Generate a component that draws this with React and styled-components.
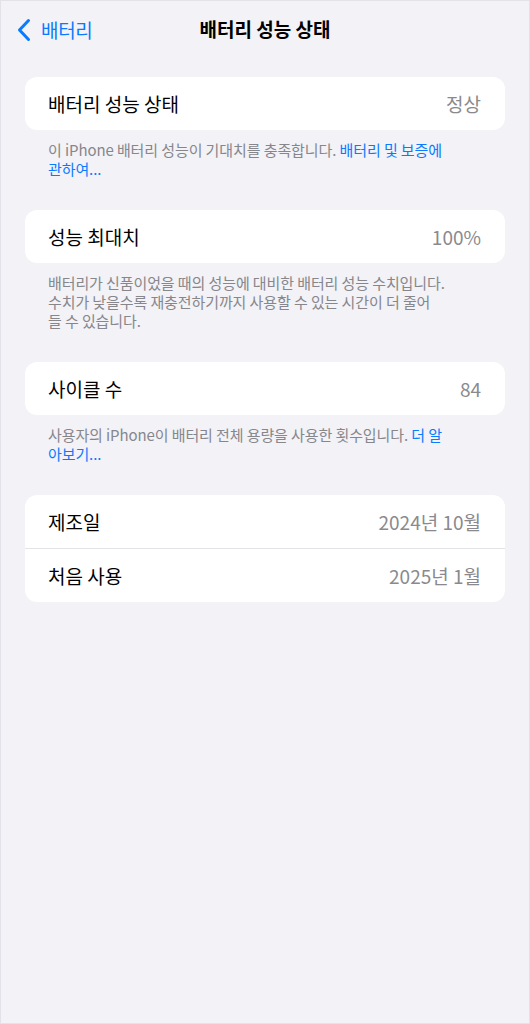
import React from 'react';
import styled, { createGlobalStyle } from 'styled-components';

const GlobalStyle = createGlobalStyle`
  * { box-sizing: border-box; }
  body {
    margin: 0;
    background: #f2f2f7;
    font-family: 'Noto Sans CJK KR', 'Noto Sans', sans-serif;
  }
`;

const Page = styled.div`
  width: 530px;
  min-height: 1024px;
  border: 1px solid #e2e2e8;
  background: #f2f2f7;
  padding: 0 24px;
`;

const NavBar = styled.header`
  position: relative;
  height: 54px;
  display: flex;
  align-items: center;
  justify-content: center;
`;

const BackButton = styled.div`
  position: absolute;
  left: -9px;
  top: 15px;
  display: flex;
  align-items: center;
  gap: 9px;
  color: #0a7aff;
  font-size: 19px;
  letter-spacing: -0.3px;
`;

const Title = styled.h1`
  margin: 0;
  font-size: 19px;
  font-weight: 700;
  letter-spacing: 0;
  color: #000;
`;

const Section = styled.section`
  margin-top: ${({ $first }) => ($first ? '22px' : '32px')};
`;

const Card = styled.div`
  background: #fff;
  border-radius: 12px;
  overflow: hidden;
`;

const Row = styled.div`
  height: ${({ $h }) => $h || 53}px;
  display: flex;
  align-items: center;
  justify-content: space-between;
  padding: 0 24px 0 23px;
  font-size: 19px;
  letter-spacing: 0;
  color: #000;
  & + & {
    border-top: 1px solid #e4e4e8;
  }
`;

const Label = styled.span``;

const Value = styled.span`
  color: #8a8a8e;
`;

const Footer = styled.p`
  margin: 0;
  padding: 10px 23px 0;
  font-size: 15px;
  line-height: 19px;
  letter-spacing: -0.1px;
  color: #86868b;
`;

const Link = styled.span`
  color: #0a7aff;
`;

const Chevron = () => (
  <svg width="16" height="24" viewBox="0 0 16 24">
    <path
      d="M12.5 2.5 L3.5 12 L12.5 21.5"
      fill="none"
      stroke="#0a7aff"
      strokeWidth="3"
      strokeLinecap="round"
      strokeLinejoin="round"
    />
  </svg>
);

const App = () => {
  return (
    <>
      <GlobalStyle />
      <Page>
        <NavBar>
          <BackButton>
            <Chevron />
            배터리
          </BackButton>
          <Title>배터리 성능 상태</Title>
        </NavBar>

        <Section $first>
          <Card>
            <Row>
              <Label>배터리 성능 상태</Label>
              <Value>정상</Value>
            </Row>
          </Card>
          <Footer>
            이 iPhone 배터리 성능이 기대치를 충족합니다. <Link>배터리 및 보증에</Link>
            <br />
            <Link>관하여...</Link>
          </Footer>
        </Section>

        <Section>
          <Card>
            <Row>
              <Label>성능 최대치</Label>
              <Value>100%</Value>
            </Row>
          </Card>
          <Footer>
            배터리가 신품이었을 때의 성능에 대비한 배터리 성능 수치입니다.
            <br />
            수치가 낮을수록 재충전하기까지 사용할 수 있는 시간이 더 줄어
            <br />
            들 수 있습니다.
          </Footer>
        </Section>

        <Section>
          <Card>
            <Row>
              <Label>사이클 수</Label>
              <Value>84</Value>
            </Row>
          </Card>
          <Footer>
            사용자의 iPhone이 배터리 전체 용량을 사용한 횟수입니다. <Link>더 알</Link>
            <br />
            <Link>아보기...</Link>
          </Footer>
        </Section>

        <Section>
          <Card>
            <Row>
              <Label>제조일</Label>
              <Value>2024년 10월</Value>
            </Row>
            <Row $h={54}>
              <Label>처음 사용</Label>
              <Value>2025년 1월</Value>
            </Row>
          </Card>
        </Section>
      </Page>
    </>
  );
};

export default App;
